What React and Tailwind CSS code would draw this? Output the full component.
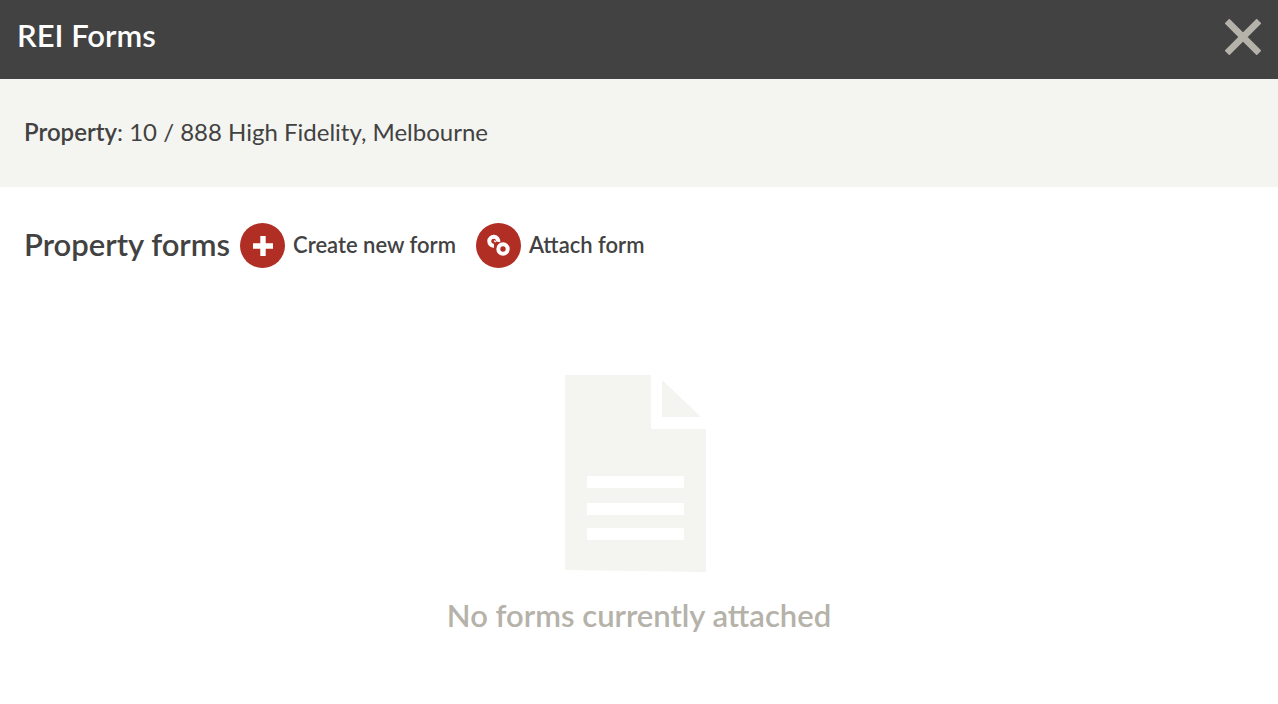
const IconClose = () => (
  <svg viewBox="0 0 36 36" fill="none" className="h-9 w-9" strokeWidth="6.6">
    <path d="M2 2l32 32M34 2L2 34" stroke="currentColor" />
  </svg>
);
const IconPlus = () => (
  <svg viewBox="0 0 20 20" fill="none" className="h-5 w-5" strokeWidth="5.4">
    <path d="M10 0v20M0 10h20" stroke="currentColor" />
  </svg>
);
const IconLink = () => (
  <svg viewBox="0 0 24 24" fill="none" className="h-6 w-6" strokeWidth="4">
    <path d="M12.2 7.9a4.5 4.5 0 1 0-4.2 3.8" stroke="currentColor" />
    <path d="M8.2 6.6l1.6 1.4" stroke="currentColor" strokeWidth="1.4" />
    <circle cx="17" cy="15" r="4.7" stroke="currentColor" />
  </svg>
);
// the page sits left of the fold's margin
const IconDocument = () => (
  <svg viewBox="0 0 149 198" fill="currentColor" className="h-[198px] w-[149px] text-[#f4f5f0]">
    <path fillRule="evenodd" d="M0 0h86v54h55v143L0 195zM22 101v12h97v-12zM22 128v12h97v-12zM22 153v12h97v-12z" />
    <path d="M97 5l39 37H97z" />
  </svg>
);

const actions = [
  { label: 'Create new form', Icon: IconPlus },
  { label: 'Attach form', Icon: IconLink },
];

function ActionButton({ label, Icon }) {
  return (
    <button type="button" className="flex items-center gap-2 text-[22px] font-semibold cursor-pointer">
      <span className="flex h-[45px] w-[45px] shrink-0 items-center justify-center rounded-full bg-[#b02e24] text-white">
        <Icon />
      </span>
      <span className="pb-0.5">{label}</span>
    </button>
  );
}

export default function App() {
  return (
    <div className="min-h-screen bg-white text-[#424242] font-['Lato',sans-serif]">
      <header className="flex items-start justify-between bg-[#424242] px-[17px] pt-[15px] pb-6">
        <h1 className="text-[31px] leading-10 font-semibold text-white">REI Forms</h1>
        <button type="button" aria-label="Close" className="mt-1 text-[#b5b2a9] cursor-pointer">
          <IconClose />
        </button>
      </header>

      <section className="bg-[#f4f5f0] px-6 pt-[33px] pb-[35px]">
        <p className="text-2xl leading-10">
          <strong className="font-semibold">Property</strong>: 10 / 888 High Fidelity, Melbourne
        </p>
      </section>

      <main className="px-6 pt-9">
        <div className="flex flex-wrap items-center gap-2.5">
          <h2 className="pb-1 text-[31px] leading-10 font-semibold">Property forms</h2>
          <div className="flex flex-wrap items-center gap-5">
            {actions.map(({ label, Icon }) => (
              <ActionButton key={label} label={label} Icon={Icon} />
            ))}
          </div>
        </div>

        <div className="flex flex-col items-center gap-[22px] pt-[107px] text-[#b5b2a9]">
          <IconDocument />
          <p className="text-[31px] leading-10 font-semibold">No forms currently attached</p>
        </div>
      </main>
    </div>
  );
}
